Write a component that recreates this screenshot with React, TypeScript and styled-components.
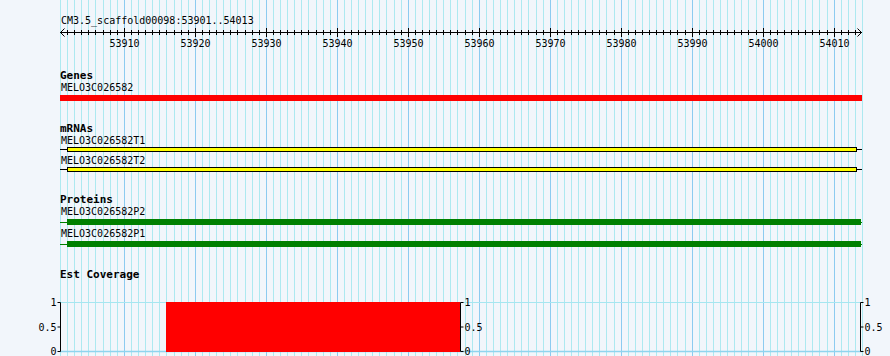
import React from 'react';
import styled, { createGlobalStyle } from 'styled-components';

const START = 53901;
const END = 54013;
const BP = END - START + 1;
const TRACK_W = 802;
const BP_W = TRACK_W / BP;
const PAGE_H = 356;

const bpX = (k: number) => Math.round(k * BP_W) + 0.5;

interface IFeature {
    name: string;
    kind: 'mrna' | 'protein';
}

interface ITrack {
    title: string;
    features: IFeature[];
}

const mrnaTrack: ITrack = {
    title: 'mRNAs',
    features: [
        { name: 'MELO3C026582T1', kind: 'mrna' },
        { name: 'MELO3C026582T2', kind: 'mrna' },
    ],
};

const proteinTrack: ITrack = {
    title: 'Proteins',
    features: [
        { name: 'MELO3C026582P2', kind: 'protein' },
        { name: 'MELO3C026582P1', kind: 'protein' },
    ],
};

const GridLines = () => {
    const lines = [];
    for (let k = 0; k <= BP; k++) {
        const major = (k - 9) % 10 === 0 && k >= 9;
        lines.push(
            <line
                key={k}
                x1={bpX(k)}
                x2={bpX(k)}
                y1={0}
                y2={PAGE_H}
                stroke={major ? '#8ccbf0' : '#ade9f0'}
                strokeWidth={1}
            />
        );
    }
    return (
        <GridSvg width={TRACK_W + 2} height={PAGE_H}>
            {lines}
        </GridSvg>
    );
};

const Ruler = () => {
    const ticks = [];
    const labels = [];
    for (let k = 1; k < BP; k++) {
        const major = (k - 9) % 10 === 0 && k >= 9;
        const x = bpX(k);
        ticks.push(
            <line key={k} x1={x} x2={x} y1={major ? 1 : 3} y2={major ? 10 : 8} stroke="#000" />
        );
        if (major) {
            labels.push(
                <text key={'l' + k} x={x} y={20} textAnchor="middle">
                    {START + k}
                </text>
            );
        }
    }
    return (
        <RulerSvg width={TRACK_W} height={23}>
            <line x1={0} x2={TRACK_W} y1={5.5} y2={5.5} stroke="#000" />
            <polyline points="4.5,1.5 0.5,5.5 4.5,9.5" fill="none" stroke="#000" />
            <polyline points={`${TRACK_W - 4.5},1.5 ${TRACK_W - 0.5},5.5 ${TRACK_W - 4.5},9.5`} fill="none" stroke="#000" />
            {ticks}
            {labels}
        </RulerSvg>
    );
};

const CoveragePlot = () => {
    const top = 21.5;
    const bottom = 70.5;
    const mid = (top + bottom) / 2;
    const axis = (x: number, side: 'left' | 'right') => {
        const dir = side === 'left' ? -1 : 1;
        const tx = x + dir * 4;
        return (
            <g key={x}>
                <line x1={x} x2={x} y1={top} y2={bottom} stroke="#000" />
                {[top, mid, bottom].map((y) => (
                    <line key={y} x1={x} x2={x + dir * 3} y1={y} y2={y} stroke="#000" />
                ))}
                {[['1', top], ['0.5', mid], ['0', bottom]].map(([t, y]) => (
                    <text
                        key={t as string}
                        x={tx}
                        y={(y as number) + 3.5}
                        textAnchor={side === 'left' ? 'end' : 'start'}
                    >
                        {t}
                    </text>
                ))}
            </g>
        );
    };
    return (
        <PlotSvg width={890} height={76}>
            <line x1={60} x2={862} y1={top} y2={top} stroke="#a6e6f0" />
            <line x1={60} x2={862} y1={bottom} y2={bottom} stroke="#8fd4ee" strokeWidth={1.5} />
            <rect x={166} y={21} width={294} height={50} fill="#ff0000" />
            {axis(60.5, 'left')}
            {axis(460.5, 'right')}
            {axis(860.5, 'right')}
        </PlotSvg>
    );
};

const FeatureGlyph = ({ kind }: { kind: IFeature['kind'] }) => (
    <GlyphRow $kind={kind}>
        <Stub $kind={kind} $w={7} />
        <FeatureBar $kind={kind} />
        <Stub $kind={kind} $w={kind === 'mrna' ? 5 : 1} />
    </GlyphRow>
);

const FeatureTrack = ({ track }: { track: ITrack }) => (
    <TrackBlock>
        <TrackTitle>{track.title}</TrackTitle>
        {track.features.map((f, i) => (
            <FeatureItem key={f.name} $first={i === 0}>
                <FeatureLabel>{f.name}</FeatureLabel>
                <FeatureGlyph kind={f.kind} />
            </FeatureItem>
        ))}
    </TrackBlock>
);

const App = (): JSX.Element => {
    return (
        <>
            <GlobalStyle />
            <Page>
                <GridLines />
                <Content>
                    <RefTitle>CM3.5_scaffold00098:53901..54013</RefTitle>
                    <Ruler />

                    <TrackBlock>
                        <TrackTitle>Genes</TrackTitle>
                        <FeatureLabel>MELO3C026582</FeatureLabel>
                        <GeneBar />
                    </TrackBlock>

                    <FeatureTrack track={mrnaTrack} />
                    <FeatureTrack track={proteinTrack} />

                    <TrackBlock>
                        <TrackTitle>Est Coverage</TrackTitle>
                        <CoveragePlot />
                    </TrackBlock>
                </Content>
            </Page>
        </>
    );
};

export default App;


const GlobalStyle = createGlobalStyle`
    html, body {
        margin: 0;
        padding: 0;
        background: #f2f6fb;
    }
    body {
        font-family: "DejaVu Sans Mono", "Liberation Mono", monospace;
        color: #000;
    }
`;

const Page = styled.div`
    position: relative;
    width: 890px;
    height: ${PAGE_H}px;
    overflow: hidden;
    background: #f2f6fb;
`;

const GridSvg = styled.svg`
    position: absolute;
    left: 60px;
    top: 0;
    z-index: 0;
`;

const Content = styled.div`
    position: relative;
    z-index: 1;
    padding-left: 60px;
    padding-top: 15px;
    display: flex;
    flex-direction: column;
`;

const RefTitle = styled.div`
    font-size: 10px;
    line-height: 12px;
    padding-left: 1px;
`;

const RulerSvg = styled.svg`
    display: block;
    overflow: visible;
    font-family: "DejaVu Sans Mono", monospace;
    font-size: 10px;
`;

const TrackBlock = styled.div`
    margin-top: 20px;
    display: flex;
    flex-direction: column;
    & + & {
        margin-top: 22px;
    }
`;

const TrackTitle = styled.div`
    font-size: 11px;
    line-height: 12px;
    font-weight: bold;
`;

const FeatureItem = styled.div<{ $first: boolean }>`
    display: flex;
    flex-direction: column;
    margin-top: ${(p) => (p.$first ? 0 : 3)}px;
`;

const FeatureLabel = styled.div`
    font-size: 10px;
    line-height: 12px;
    padding-left: 1px;
`;

const GeneBar = styled.div`
    margin-top: 1px;
    width: ${TRACK_W}px;
    height: 6px;
    background: #ff0000;
`;

const GlyphRow = styled.div<{ $kind: IFeature['kind'] }>`
    display: flex;
    flex-direction: row;
    align-items: center;
    width: ${TRACK_W}px;
    height: ${(p) => (p.$kind === 'mrna' ? 5 : 6)}px;
    margin-top: ${(p) => (p.$kind === 'mrna' ? 0 : 1)}px;
`;

const Stub = styled.div<{ $kind: IFeature['kind']; $w: number }>`
    flex: 0 0 ${(p) => p.$w}px;
    height: 1px;
    background: ${(p) => (p.$kind === 'mrna' ? '#000' : '#008000')};
`;

const FeatureBar = styled.div<{ $kind: IFeature['kind'] }>`
    flex: 1;
    box-sizing: border-box;
    height: 100%;
    background: ${(p) => (p.$kind === 'mrna' ? '#ffff00' : '#008000')};
    border: ${(p) => (p.$kind === 'mrna' ? '1px solid #000' : 'none')};
`;

const PlotSvg = styled.svg`
    display: block;
    margin-left: -60px;
    font-family: "DejaVu Sans Mono", monospace;
    font-size: 10px;
`;
